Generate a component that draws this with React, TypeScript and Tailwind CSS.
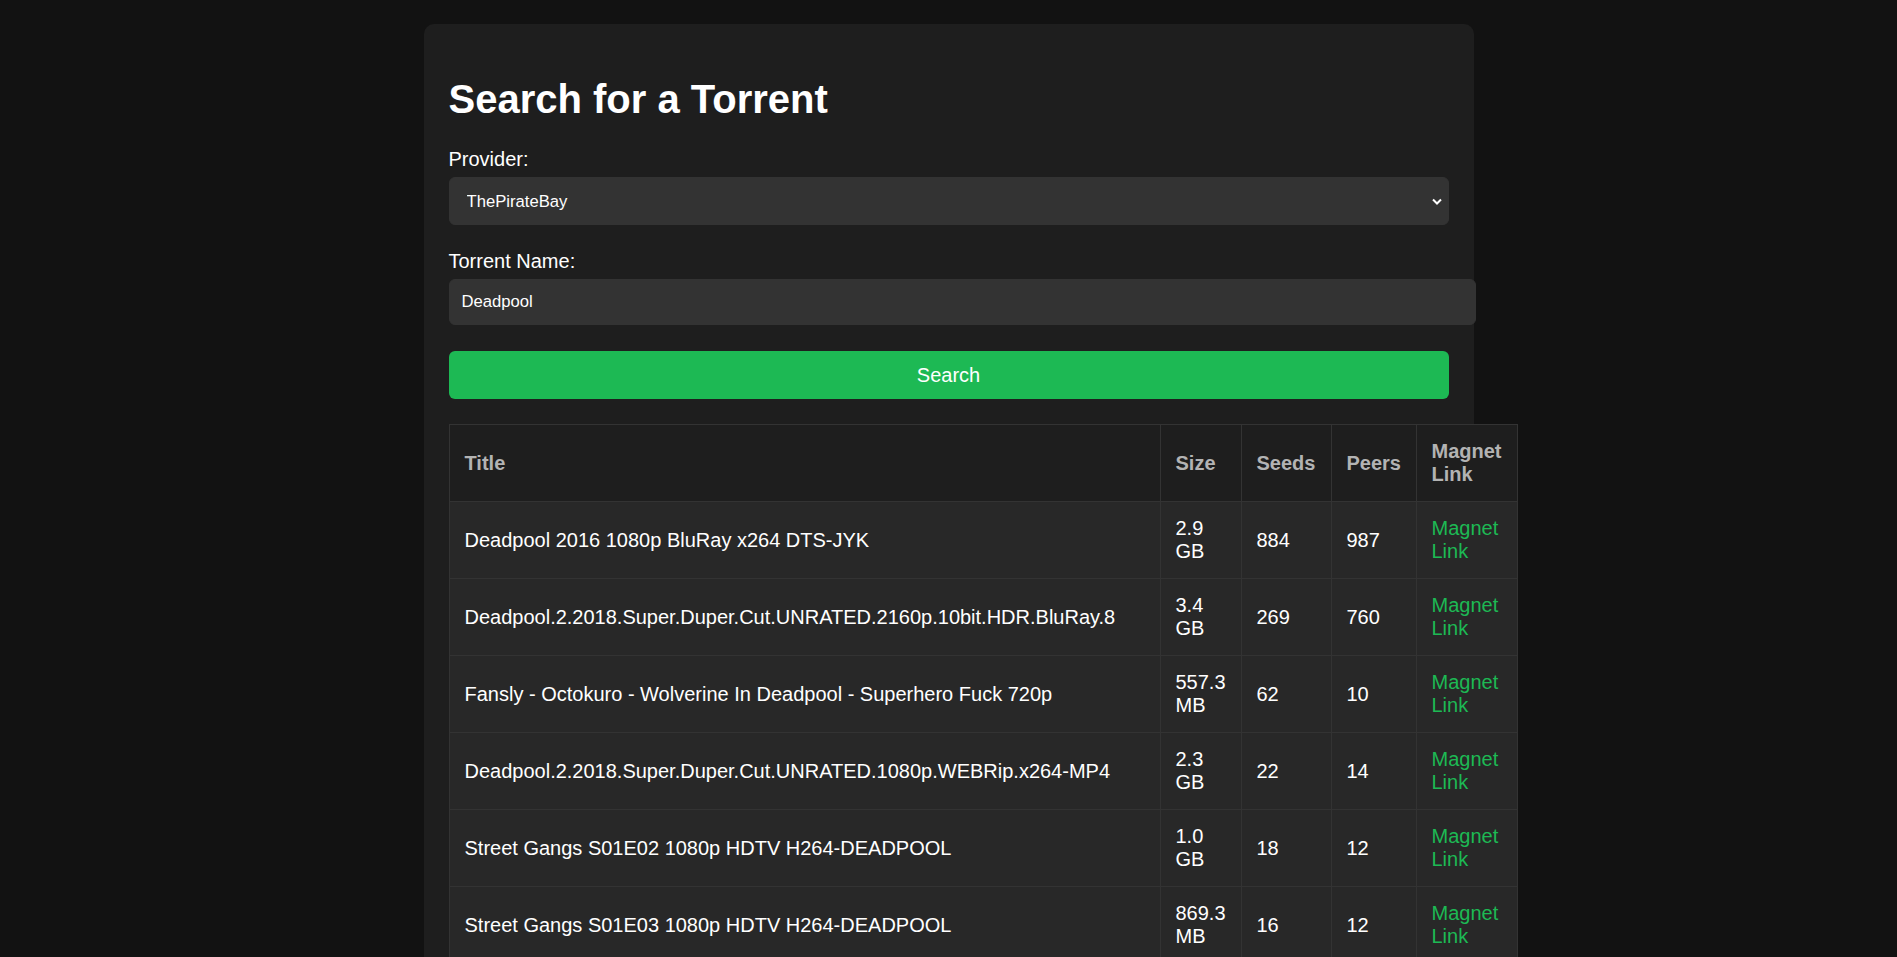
const results = [
  { title: "Deadpool 2016 1080p BluRay x264 DTS-JYK", size: "2.9 GB", seeds: 884, peers: 987 },
  { title: "Deadpool.2.2018.Super.Duper.Cut.UNRATED.2160p.10bit.HDR.BluRay.8", size: "3.4 GB", seeds: 269, peers: 760 },
  { title: "Fansly - Octokuro - Wolverine In Deadpool - Superhero Fuck 720p", size: "557.3 MB", seeds: 62, peers: 10 },
  { title: "Deadpool.2.2018.Super.Duper.Cut.UNRATED.1080p.WEBRip.x264-MP4", size: "2.3 GB", seeds: 22, peers: 14 },
  { title: "Street Gangs S01E02 1080p HDTV H264-DEADPOOL", size: "1.0 GB", seeds: 18, peers: 12 },
  { title: "Street Gangs S01E03 1080p HDTV H264-DEADPOOL", size: "869.3 MB", seeds: 16, peers: 12 },
  { title: "Deadpool 2 2018 1080p WEB-DL DD5.1 H264-FGT", size: "4.2 GB", seeds: 11, peers: 9 },
];

export default function App() {
  return (
    <div
      className="min-h-screen bg-[#121212] pt-[24px] text-white"
      style={{ fontFamily: "'Liberation Sans', Arial, sans-serif" }}
    >
      <div className="mx-auto w-[1050px] rounded-[10px] bg-[#1e1e1e] p-[25px]">
        <h1 className="mt-[27px] mb-[26px] text-[40px] leading-[46px] font-bold">Search for a Torrent</h1>

        <form>
          <label className="mb-[6px] block text-[20px] leading-[23px]">Provider:</label>
          <div className="relative">
            <select className="block h-[48px] w-full appearance-none rounded-[6px] border border-[#333333] bg-[#333333] pl-[17px] text-[16.67px] text-white outline-none">
              <option>ThePirateBay</option>
              <option>1337x</option>
              <option>YTS</option>
            </select>
            <svg
              className="pointer-events-none absolute right-[7px] top-[21px]"
              width="10"
              height="7"
              viewBox="0 0 10 7"
              fill="none"
            >
              <path d="M1 1.5 L5 5.5 L9 1.5" stroke="white" strokeWidth="2" />
            </svg>
          </div>

          <label className="mt-[25px] mb-[6px] block text-[20px] leading-[23px]">Torrent Name:</label>
          <input
            type="text"
            defaultValue="Deadpool"
            className="block h-[46px] w-[1027px] rounded-[6px] border border-[#333333] bg-[#333333] px-[12px] text-[16.67px] text-white outline-none"
          />

          <button
            type="button"
            className="mt-[26px] block h-[48px] w-full rounded-[6px] bg-[#1db954] text-[20px] text-white"
          >
            Search
          </button>
        </form>

        <table className="mt-[25px] w-[1068px] table-fixed border-collapse text-[20px] leading-[23px]">
          <colgroup>
            <col className="w-[711px]" />
            <col className="w-[81px]" />
            <col className="w-[90px]" />
            <col className="w-[85px]" />
            <col className="w-[101px]" />
          </colgroup>
          <thead>
            <tr className="bg-[#1e1e1e] text-[#b3b3b3]">
              <th className="border border-[#333333] px-[15px] py-[15px] text-left font-bold">Title</th>
              <th className="border border-[#333333] px-[15px] py-[15px] text-left font-bold">Size</th>
              <th className="border border-[#333333] px-[15px] py-[15px] text-left font-bold">Seeds</th>
              <th className="border border-[#333333] px-[15px] py-[15px] text-left font-bold">Peers</th>
              <th className="border border-[#333333] px-[15px] py-[15px] text-left font-bold">Magnet Link</th>
            </tr>
          </thead>
          <tbody>
            {results.map((r, i) => (
              <tr key={i} className="bg-[#282828]">
                <td className="border border-[#333333] px-[15px] py-[15px]">{r.title}</td>
                <td className="border border-[#333333] px-[15px] py-[15px]">{r.size}</td>
                <td className="border border-[#333333] px-[15px] py-[15px]">{r.seeds}</td>
                <td className="border border-[#333333] px-[15px] py-[15px]">{r.peers}</td>
                <td className="border border-[#333333] px-[15px] py-[15px]">
                  <a href="#" className="text-[#1db954]">Magnet Link</a>
                </td>
              </tr>
            ))}
          </tbody>
        </table>
      </div>
    </div>
  );
}
